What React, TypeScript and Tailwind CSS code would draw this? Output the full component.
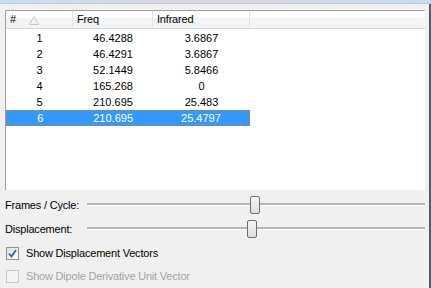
import React from 'react';

const rows = [
  { id: 1, freq: '46.4288', ir: '3.6867' },
  { id: 2, freq: '46.4291', ir: '3.6867' },
  { id: 3, freq: '52.1449', ir: '5.8466' },
  { id: 4, freq: '165.268', ir: '0' },
  { id: 5, freq: '210.695', ir: '25.483' },
  { id: 6, freq: '210.695', ir: '25.4797' },
];

function Slider({ label, thumb }: { label: string; thumb: number }) {
  return (
    <div className="flex items-center h-[18px]">
      <div className="w-[87px] shrink-0 pl-[5px]">{label}</div>
      <div className="relative flex-1 h-[18px] mr-[4px]">
        <div className="absolute left-0 right-0 top-[7px] h-[2px] bg-[#b5b5b5]" />
        <div className="absolute left-0 right-0 top-[9px] h-[1px] bg-white" />
        <div
          className="absolute top-0 w-[10px] h-[18px] rounded-[2px] border border-[#707070] bg-gradient-to-b from-[#f6f6f6] to-[#dcdcdc]"
          style={{ left: thumb }}
        />
      </div>
    </div>
  );
}

function Check({ label, checked, disabled }: { label: string; checked?: boolean; disabled?: boolean }) {
  return (
    <div className="flex items-center h-[16px] pl-[6px]">
      <div
        className={`w-[13px] h-[13px] border flex items-center justify-center ${
          disabled ? 'border-[#c6c6c6] bg-[#f4f4f4]' : 'border-[#8e8f8f] bg-gradient-to-br from-[#dcdcdc] to-white'
        }`}
      >
        {checked && (
          <svg width="9" height="9" viewBox="0 0 9 9">
            <path d="M1 4.5 L3.5 7.5 L8 1" fill="none" stroke="#3e5aa0" strokeWidth="1.8" />
          </svg>
        )}
      </div>
      <span className={`ml-[7px] ${disabled ? 'text-[#a3a3a3]' : 'text-black'}`}>{label}</span>
    </div>
  );
}

export default function App() {
  return (
    <div
      className="w-[431px] h-[288px] bg-[#f0f0f0] overflow-hidden flex flex-col text-[11px] tracking-[-0.2px] text-black"
      style={{ fontFamily: '"Liberation Sans", Arial, sans-serif' }}
    >
      <div className="h-[3px] shrink-0 bg-gradient-to-r from-[#c9dff4] via-[#e0d6de] to-[#c4dcf2]" />
      <div className="h-[1px] shrink-0 bg-[#b9c9d9]" />
      <div className="flex flex-1">
        <div className="flex-1 flex flex-col">
          {/* list */}
          <div className="ml-[5px] mt-[6px] w-[420px] h-[180px] bg-white border-t border-l border-[#a0a0a0] flex flex-col">
            <div className="flex h-[18px] border-b border-[#d5d5d5] bg-gradient-to-b from-white from-40% to-[#f2f3f5] to-40%">
              <div className="w-[67px] border-r border-[#e2e3e5] flex items-center pl-[4px] relative">
                #
                <svg className="absolute left-[23px] top-[5px]" width="10" height="9" viewBox="0 0 10 9">
                  <path d="M5 0.5 L9.5 8.5 L0.5 8.5 Z" fill="none" stroke="#c2c8cf" strokeWidth="1" />
                </svg>
              </div>
              <div className="w-[80px] border-r border-[#e2e3e5] flex items-center pl-[4px]">Freq</div>
              <div className="w-[97px] border-r border-[#e2e3e5] flex items-center pl-[4px]">Infrared</div>
              <div className="flex-1" />
            </div>
            <div className="pt-[1px] tracking-normal">
              {rows.map((r) => {
                const sel = r.id === 6;
                return (
                  <div
                    key={r.id}
                    className={`flex h-[16px] items-center w-[244px] ${
                      sel ? 'bg-[#3399ff] text-white border border-dotted border-[#c47a3a]' : ''
                    }`}
                  >
                    <div className="w-[67px] text-center">{r.id}</div>
                    <div className="w-[80px] text-center">{r.freq}</div>
                    <div className="w-[97px] text-center">{r.ir}</div>
                  </div>
                );
              })}
            </div>
          </div>

          <div className="mt-[6px]">
            <Slider label="Frames / Cycle:" thumb={163} />
          </div>
          <div className="mt-[6px]">
            <Slider label="Displacement:" thumb={160} />
          </div>
          <div className="mt-[7px]">
            <Check label="Show Displacement Vectors" checked />
          </div>
          <div className="mt-[7px]">
            <Check label="Show Dipole Derivative Unit Vector" disabled />
          </div>
        </div>
        <div className="w-[2px] shrink-0 bg-[#4d5c6b]" />
      </div>
    </div>
  );
}
